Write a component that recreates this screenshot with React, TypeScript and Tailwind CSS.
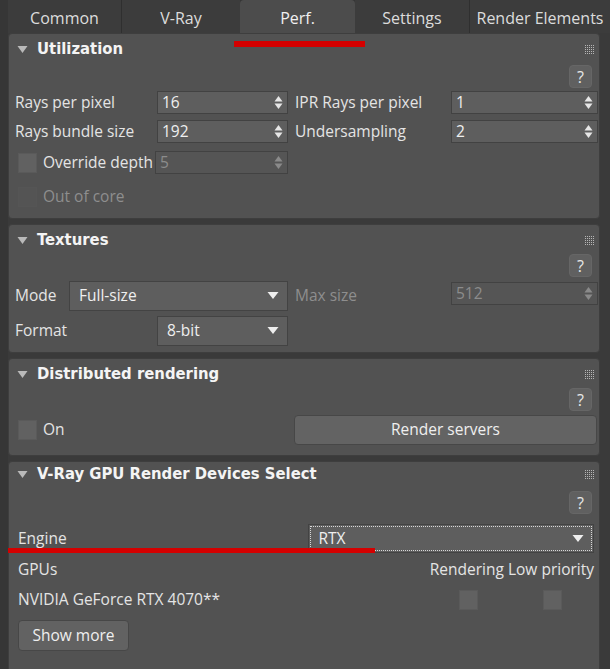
import type { ReactNode } from 'react';

const body = { fontFamily: '"Open Sans", "Noto Sans", sans-serif' };
const title = { fontFamily: '"DejaVu Sans Condensed", "DejaVu Sans", Verdana, sans-serif' };

function GridIcon() {
  return (
    <svg width="9" height="9" viewBox="0 0 9 9" className="opacity-80">
      {[0, 2, 4, 6, 8].map((y) =>
        [0, 2, 4, 6, 8].map((x) => <rect key={`${x}-${y}`} x={x} y={y} width="1" height="1" fill="#cfcfcf" />),
      )}
    </svg>
  );
}

function Spinner({ disabled }: { disabled?: boolean }) {
  const c = disabled ? '#8a8a8a' : '#e6e6e6';
  return (
    <svg width="9" height="15" viewBox="0 0 9 15">
      <path d="M4.5 1 L8.5 6.5 L0.5 6.5 Z" fill={c} />
      <path d="M4.5 14 L8.5 8.5 L0.5 8.5 Z" fill={c} />
    </svg>
  );
}

function DropArrow() {
  return (
    <svg width="12" height="9" viewBox="0 0 12 9">
      <path d="M0.5 1 L11.5 1 L6 8 Z" fill="#eeeeee" />
    </svg>
  );
}

function Panel({
  name,
  className,
  head = 'h-[30px]',
  children,
}: {
  name: string;
  className: string;
  head?: string;
  children: ReactNode;
}) {
  return (
    <section className={`relative rounded-sm border border-[#3e3e3e] bg-[#525252] ${className}`}>
      <div className={`flex items-center pl-[8px] pr-[5px] ${head}`}>
        <svg width="11" height="9" viewBox="0 0 11 9" className="mr-[9px]">
          <path d="M0.5 1 L10.5 1 L5.5 8 Z" fill="#b9b9b9" />
        </svg>
        <span style={title} className="text-[16.5px] font-bold text-[#f4f4f4]">
          {name}
        </span>
        <div className="ml-auto">
          <GridIcon />
        </div>
      </div>
      {children}
    </section>
  );
}

function Help({ mt }: { mt: string }) {
  return (
    <div className={`flex justify-end pr-[7px] ${mt}`}>
      <div className="flex h-[23px] w-[23px] items-center justify-center rounded-[4px] border border-[#666] bg-[#606060] text-[16px] text-[#e8e8e8]">
        ?
      </div>
    </div>
  );
}

function NumInput({ value, width, disabled }: { value: string; width: string; disabled?: boolean }) {
  return (
    <div
      className={`flex h-[23px] items-center justify-between border border-[#424242] pl-[4px] pr-[4px] ${width} ${
        disabled ? 'bg-[#555555] text-[#8c8c8c]' : 'bg-[#5e5e5e] text-[#efefef]'
      }`}
    >
      <span>{value}</span>
      <Spinner disabled={disabled} />
    </div>
  );
}

function Select({ value, width, h, dotted }: { value: string; width: string; h: string; dotted?: boolean }) {
  return (
    <div className={`flex items-center justify-between border border-[#434343] bg-[#5e5e5e] p-[1px] ${width} ${h}`}>
      <div
        className={`flex h-full w-full items-center justify-between pl-[8px] pr-[7px] text-[#efefef] ${
          dotted ? 'border border-dotted border-[#d8d8d8]' : ''
        }`}
      >
        <span>{value}</span>
        <DropArrow />
      </div>
    </div>
  );
}

function Check({ disabled }: { disabled?: boolean }) {
  return (
    <div
      className={`h-[20px] w-[19px] border ${disabled ? 'border-[#555] bg-[#545454]' : 'border-[#5a5a5a] bg-[#616161]'}`}
    />
  );
}

const tabs = ['Common', 'V-Ray', 'Perf.', 'Settings', 'Render Elements'];
const tabW = ['w-[114px]', 'w-[118px]', 'w-[115px]', 'w-[115px]', 'w-[140px]'];

export default function App() {
  return (
    <div style={body} className="relative flex h-[669px] w-[610px] overflow-hidden bg-[#3a3a3a] text-[15.5px] text-[#e4e4e4]">
      <div className="w-[8px] shrink-0 bg-[#363636]" />
      <div className="flex w-[602px] flex-col">
        <div className="flex h-[33px] shrink-0 bg-[#353535]">
          {tabs.map((t, i) => (
            <div
              key={t}
              className={`flex items-center justify-center pt-[2px] text-[16px] ${tabW[i]} ${
                i === 2
                  ? 'rounded-t-sm bg-[#4c4c4c] text-[#f0f0f0]'
                  : `bg-[#3c3c3c] text-[#dcdcdc] ${i !== 1 && i !== 4 ? 'border-r border-[#2f2f2f]' : ''}`
              }`}
            >
              {t}
            </div>
          ))}
        </div>

        <div className="flex w-[592px] flex-col gap-[5px]">
          <Panel name="Utilization" className="h-[186px]">
            <Help mt="mt-[1px]" />
            <div className="mt-[3px] flex flex-col gap-[6px] pl-[6px]">
              <div className="flex h-[23px] items-center">
                <span className="w-[142px]">Rays per pixel</span>
                <NumInput value="16" width="w-[131px]" />
                <span className="ml-[7px] w-[156px]">IPR Rays per pixel</span>
                <NumInput value="1" width="w-[147px]" />
              </div>
              <div className="flex h-[23px] items-center">
                <span className="w-[142px]">Rays bundle size</span>
                <NumInput value="192" width="w-[131px]" />
                <span className="ml-[7px] w-[156px]">Undersampling</span>
                <NumInput value="2" width="w-[147px]" />
              </div>
              <div className="mt-[2px] flex h-[23px] items-center">
                <div className="ml-[3px] mr-[6px]">
                  <Check />
                </div>
                <span className="w-[112px]">Override depth</span>
                <NumInput value="5" width="w-[133px]" disabled />
              </div>
              <div className="mt-[5px] flex h-[23px] items-center">
                <div className="ml-[3px] mr-[6px]">
                  <Check disabled />
                </div>
                <span className="text-[#8e8e8e]">Out of core</span>
              </div>
            </div>
          </Panel>

          <Panel name="Textures" className="h-[129px]">
            <Help mt="mt-[-1px]" />
            <div className="mt-[4px] flex flex-col gap-[6px] pl-[6px]">
              <div className="flex h-[29px] items-center">
                <span className="w-[54px]">Mode</span>
                <Select value="Full-size" width="w-[219px]" h="h-[30px]" />
                <span className="ml-[7px] w-[156px] text-[#8e8e8e]">Max size</span>
                <div className="-mt-[4px]">
                  <NumInput value="512" width="w-[147px]" disabled />
                </div>
              </div>
              <div className="flex h-[29px] items-center">
                <span className="w-[142px]">Format</span>
                <Select value="8-bit" width="w-[131px]" h="h-[30px]" />
              </div>
            </div>
          </Panel>

          <Panel name="Distributed rendering" className="h-[98px]">
            <Help mt="mt-[-1px]" />
            <div className="mt-[4px] flex h-[30px] items-center pl-[9px] pr-[2px]">
              <Check />
              <span className="ml-[6px]">On</span>
              <div className="ml-auto flex h-[30px] w-[303px] items-center justify-center rounded-[4px] border border-[#474747] bg-[#636363] text-[#efefef]">
                Render servers
              </div>
            </div>
          </Panel>

          <Panel name="V-Ray GPU Render Devices Select" className="h-[215px]" head="h-[25px]">
            <Help mt="mt-[4px]" />
            <div className="mt-[10px] flex flex-col pl-[9px] pr-[5px]">
              <div className="flex h-[29px] items-center">
                <span className="w-[290px]">Engine</span>
                <Select value="RTX" width="w-[287px]" h="h-[29px]" dotted />
              </div>
              <div className="mt-[2px] flex h-[30px] items-center justify-between">
                <span>GPUs</span>
                <span>Rendering Low priority</span>
              </div>
              <div className="flex h-[30px] items-center">
                <span className="w-[441px]">NVIDIA GeForce RTX 4070**</span>
                <Check />
                <div className="ml-[65px]">
                  <Check />
                </div>
              </div>
              <div className="mt-[5px] flex h-[31px] w-[111px] items-center justify-center rounded-[4px] border border-[#474747] bg-[#626262] text-[#efefef]">
                Show more
              </div>
            </div>
          </Panel>
        </div>
      </div>
      <div className="h-full w-[8px] shrink-0 border-l border-[#2f2f2f] bg-[#3b3b3b]" />

      <div className="absolute left-[234px] top-[41px] h-[6px] w-[131px] bg-[#d40000]" />
      <div className="absolute left-[8px] top-[548px] h-[5px] w-[367px] bg-[#d40000]" />
    </div>
  );
}
